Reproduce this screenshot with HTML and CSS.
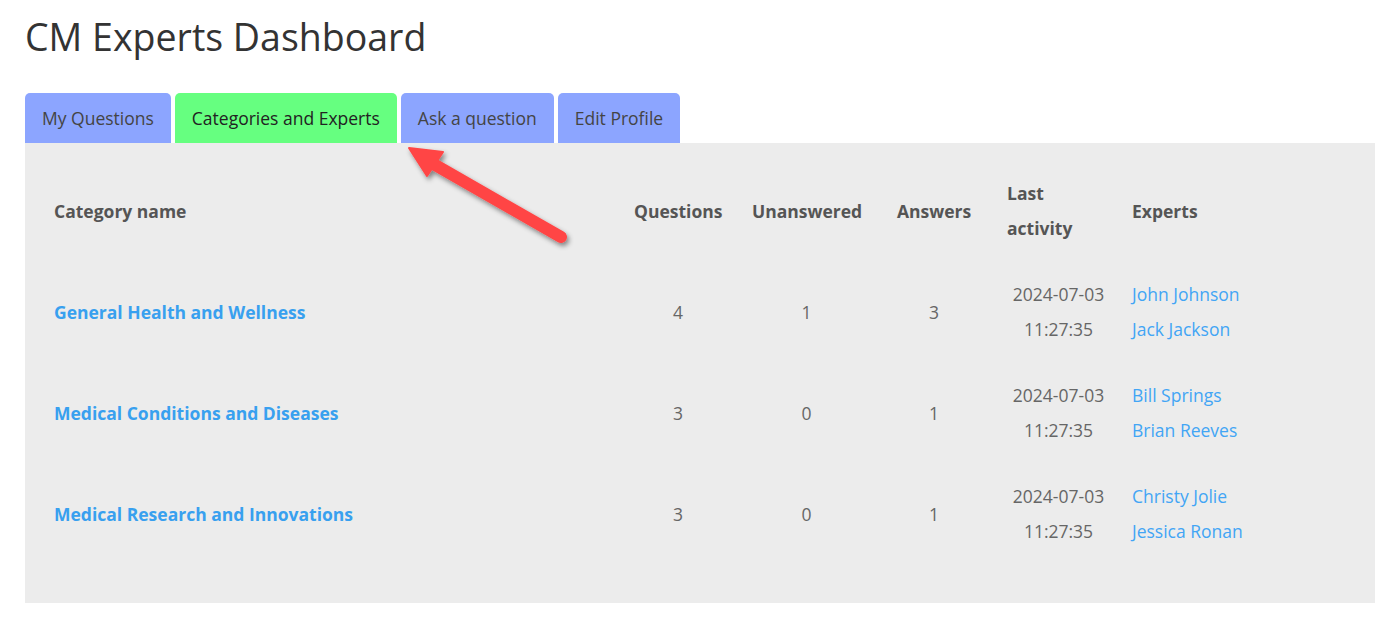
FILE: index.html
```html
<!DOCTYPE html>
<html>
<head>
<meta charset="utf-8">
<link rel="stylesheet" href="styles.css">
</head>
<body>
<div class="page">
  <h1 class="title">CM Experts Dashboard</h1>
  <div class="tabs">
    <a class="tab">My Questions</a>
    <a class="tab tab-active">Categories and Experts</a>
    <a class="tab">Ask a question</a>
    <a class="tab">Edit Profile</a>
  </div>
  <div class="panel">
    <table class="cats">
      <colgroup>
        <col class="c-name"><col class="c-q"><col class="c-u"><col class="c-a"><col class="c-l"><col class="c-e">
      </colgroup>
      <thead>
        <tr>
          <th>Category name</th>
          <th class="num">Questions</th>
          <th class="num">Unanswered</th>
          <th class="num">Answers</th>
          <th class="last">Last activity</th>
          <th>Experts</th>
        </tr>
      </thead>
      <tbody>
        <tr>
          <td><a class="cat-link">General Health and Wellness</a></td>
          <td class="num">4</td>
          <td class="num">1</td>
          <td class="num">3</td>
          <td class="num last">2024-07-03<br>11:27:35</td>
          <td><a class="expert">John Johnson</a><br><a class="expert">Jack Jackson</a></td>
        </tr>
        <tr>
          <td><a class="cat-link">Medical Conditions and Diseases</a></td>
          <td class="num">3</td>
          <td class="num">0</td>
          <td class="num">1</td>
          <td class="num last">2024-07-03<br>11:27:35</td>
          <td><a class="expert">Bill Springs</a><br><a class="expert">Brian Reeves</a></td>
        </tr>
        <tr>
          <td><a class="cat-link">Medical Research and Innovations</a></td>
          <td class="num">3</td>
          <td class="num">0</td>
          <td class="num">1</td>
          <td class="num last">2024-07-03<br>11:27:35</td>
          <td><a class="expert">Christy Jolie</a><br><a class="expert">Jessica Ronan</a></td>
        </tr>
      </tbody>
    </table>
  </div>
  <svg class="arrow" width="200" height="130" viewBox="380 130 200 130" xmlns="http://www.w3.org/2000/svg">
    <defs>
      <filter id="sh" x="-20%" y="-20%" width="140%" height="140%">
        <feDropShadow dx="2" dy="3" stdDeviation="2.5" flood-color="#000" flood-opacity="0.45"/>
      </filter>
    </defs>
    <g filter="url(#sh)">
      <line x1="430" y1="162" x2="561" y2="237" stroke="#ff4545" stroke-width="12" stroke-linecap="round"/>
      <polygon points="409,148 443,152 427,176" fill="#ff4545" stroke="#ff4545" stroke-width="2" stroke-linejoin="round"/>
    </g>
  </svg>
</div>
</body>
</html>
```

FILE: styles.css
```css
html, body {
  margin: 0;
  padding: 0;
  background: #ffffff;
}
body {
  font-family: "Open Sans", "Liberation Sans", sans-serif;
  color: #555555;
}
.page {
  position: relative;
  padding: 0 25px;
}
.title {
  margin: 0;
  padding-top: 12px;
  height: 93px;
  box-sizing: border-box;
  font-size: 37.5px;
  font-weight: 400;
  line-height: 50px;
  color: #333333;
}
.tabs {
  display: flex;
  gap: 4px;
  height: 50px;
}
.tab {
  display: flex;
  align-items: center;
  padding: 0 17px;
  font-size: 17.5px;
  color: #444444;
  background: #8ca5ff;
  border-radius: 5px 5px 0 0;
  text-decoration: none;
}
.tab-active {
  background: #66ff80;
  color: #222222;
}
.panel {
  background: #ececec;
  padding: 18px 14px 38px;
}
.cats {
  border-collapse: collapse;
  table-layout: fixed;
  width: 1322px;
  font-size: 17.5px;
}
.c-name { width: 580px; }
.c-q { width: 118px; }
.c-u { width: 139px; }
.c-a { width: 116px; }
.c-l { width: 125px; }
.c-e { width: 244px; }
.cats th, .cats td {
  padding: 15px 15px 16px;
  line-height: 35px;
  vertical-align: middle;
  text-align: left;
}
.cats th.last, .cats td.last {
  padding-right: 7px;
}
.cats th {
  font-weight: 700;
  color: #555555;
}
.cats td {
  color: #666666;
}
.cats td.num, .cats th.num {
  text-align: center;
}
.cat-link {
  font-weight: 700;
  color: #38a0ef;
  text-decoration: none;
}
.expert {
  color: #42a5f5;
  text-decoration: none;
}
.arrow {
  position: absolute;
  left: 380px;
  top: 130px;
  overflow: visible;
}
```
